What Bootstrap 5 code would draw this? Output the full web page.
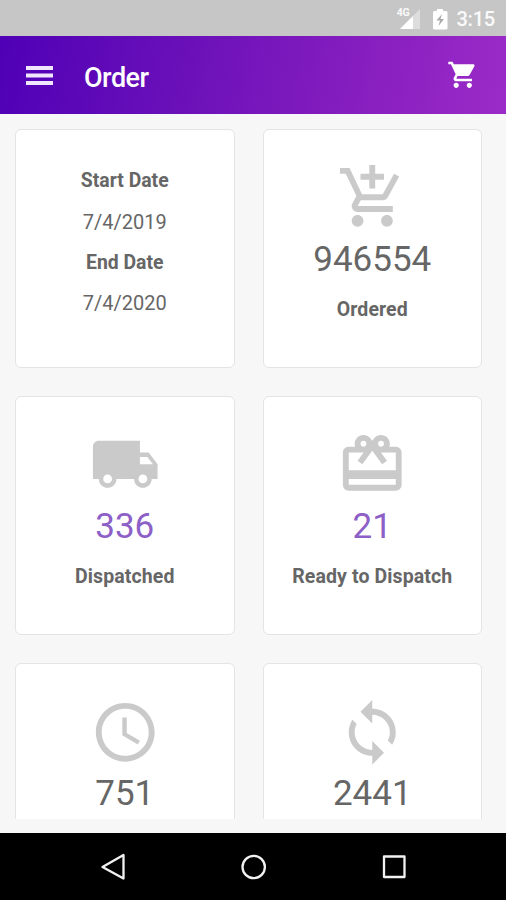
<!DOCTYPE html>
<html lang="en">
<head>
<meta charset="utf-8">
<meta name="viewport" content="width=device-width, initial-scale=1">
<title>Order</title>
<link href="https://cdn.jsdelivr.net/npm/bootstrap@5.3.0/dist/css/bootstrap.min.css" rel="stylesheet">
<style>
body{height:900px;background:#f7f7f7;font-family:Roboto,"Liberation Sans",sans-serif;color:#666}
svg{display:block;flex:none}
.status-strip{height:36px;background:#c6c6c6;color:#fafafa;padding:1px 11px 0 0;font-size:20px;font-weight:500;line-height:36px}
.net-label{font-size:10.5px;font-weight:700;line-height:10px;margin:-11px -9px 0 0;letter-spacing:-.3px}
.clock-text{margin-left:6px;letter-spacing:-.2px}
.app-bar{height:78px;background:linear-gradient(100deg,#4f00b6 0%,#6a10b9 36%,#8a20c0 75%,#9b2bc8 100%);padding:0 28px 0 26px}
.app-title{font-size:27px;font-weight:500;line-height:40px;letter-spacing:-.5px;margin:5px 0 0 31px}
.tiles{height:705px;padding:14.5px 24px 0 15px}
.tile-grid{display:grid;grid-template-columns:219.5px 219.5px;column-gap:28px;row-gap:28px}
.tile{height:239.4px;border:1.5px solid #e4e4e4;border-radius:6px;padding-top:32.5px;background:#fff}
.date-tile{padding-top:31.8px}
.tile svg{width:70.5px;height:70.5px;fill:#cacaca}
.figure-num{font-size:35px;line-height:54px}
.accent{color:#8d60c8}
.caption-text{font-size:19.5px;font-weight:700;line-height:45.6px;letter-spacing:.1px}
.date-line{font-size:20px;line-height:40.7px;letter-spacing:0}
.date-head{font-size:19.4px;font-weight:700}
.sys-bar{height:67px;background:#000}
</style>
</head>
<body class="d-flex flex-column overflow-hidden">
<div class="status-strip d-flex align-items-center justify-content-end">
  <span class="net-label">4G</span>
  <svg width="20" height="20" viewBox="0 0 20 20"><path d="M20 0V20H0Z" fill="#fff" opacity=".4"/><path d="M13 7V20H0Z" fill="#fff"/></svg>
  <svg class="ms-2" width="22" height="22" viewBox="0 0 22 22"><path fill="#fff" d="M9 1h6v2h3q1.500 0 1.500 1.500V20q0 1.500-1.500 1.500H6.500Q5 21.500 5 20V4.500Q5 3 6.500 3H9Z"/><path fill="#aaa" d="M14 6 8.500 12.500H12L10.500 18 16 11h-3.500Z"/></svg>
  <span class="clock-text">3:15</span>
</div>
<nav class="app-bar d-flex align-items-center text-white">
  <svg width="27" height="19" viewBox="0 0 27 19" fill="#f1e6ff"><path d="M0 0h27v4H0zM0 7.500h27v4H0zM0 15h27v4H0z"/></svg>
  <span class="app-title">Order</span>
  <svg class="ms-auto" width="31.500" height="31.500" viewBox="0 0 24 24" fill="#fff"><path d="M7 18c-1.100 0-1.990.9-1.990 2S5.900 22 7 22s2-.9 2-2-.9-2-2-2zM1 2v2h2l3.600 7.590-1.350 2.450c-.16.28-.25.61-.25.96 0 1.100.9 2 2 2h12v-2H7.420c-.14 0-.25-.11-.25-.25l.03-.12.9-1.630h7.450c.75 0 1.410-.41 1.750-1.030l3.580-6.490c.08-.14.12-.31.12-.48 0-.55-.45-1-1-1H5.210l-.94-2H1zm16 16c-1.100 0-1.990.9-1.990 2s.89 2 1.990 2 2-.9 2-2-.9-2-2-2z"/></svg>
</nav>
<main class="tiles overflow-hidden">
  <div class="tile-grid text-center">
    <div class="card tile date-tile">
      <div class="date-line date-head">Start Date</div>
      <div class="date-line">7/4/2019</div>
      <div class="date-line date-head">End Date</div>
      <div class="date-line">7/4/2020</div>
    </div>
    <div class="card tile align-items-center">
      <svg viewBox="0 0 24 24"><path d="M11 9h2V6h3V4h-3V1h-2v3H8v2h3v3zm-4 9c-1.100 0-1.990.9-1.990 2S5.900 22 7 22s2-.9 2-2-.9-2-2-2zm10 0c-1.100 0-1.990.9-1.990 2s.89 2 1.990 2 2-.9 2-2-.9-2-2-2zm-9.830-3.250.03-.12.9-1.630h7.450c.75 0 1.410-.41 1.750-1.030l3.860-7.010L19.420 4h-.01l-1.100 2-2.760 5H8.530l-.13-.27L6.160 6l-.95-2-.94-2H1v2h2l3.600 7.590-1.350 2.450c-.16.28-.25.61-.25.96 0 1.100.9 2 2 2h12v-2H7.420c-.13 0-.25-.11-.25-.25z"/></svg>
      <div class="figure-num">946554</div><div class="caption-text">Ordered</div>
    </div>
    <div class="card tile align-items-center">
      <svg viewBox="0 0 24 24"><path d="M20 8h-3V4H3c-1.100 0-2 .9-2 2v11h2c0 1.660 1.340 3 3 3s3-1.340 3-3h6c0 1.660 1.340 3 3 3s3-1.340 3-3h2v-5l-3-4zM6 18.500c-.83 0-1.500-.67-1.500-1.500s.67-1.500 1.500-1.500 1.500.67 1.500 1.500-.67 1.500-1.500 1.500zm13.500-9 1.960 2.500H17V9.500h2.500zm-1.500 9c-.83 0-1.500-.67-1.500-1.500s.67-1.500 1.500-1.500 1.500.67 1.500 1.500-.67 1.500-1.500 1.500z"/></svg>
      <div class="figure-num accent">336</div><div class="caption-text">Dispatched</div>
    </div>
    <div class="card tile align-items-center">
      <svg viewBox="0 0 24 24"><path d="M20 6h-2.180c.11-.31.18-.65.18-1 0-1.660-1.340-3-3-3-1.050 0-1.960.54-2.500 1.350l-.5.67-.5-.68C10.960 2.540 10.050 2 9 2 7.340 2 6 3.340 6 5c0 .35.07.69.18 1H4c-1.110 0-1.990.89-1.990 2L2 19c0 1.110.89 2 2 2h16c1.110 0 2-.89 2-2V8c0-1.110-.89-2-2-2zm-5-2c.55 0 1 .45 1 1s-.45 1-1 1-1-.45-1-1 .45-1 1-1zM9 4c.55 0 1 .45 1 1s-.45 1-1 1-1-.45-1-1 .45-1 1-1zm11 15H4v-2h16v2zm0-5H4V8h5.080L7 10.830 8.620 12 11 8.760l1-1.360 1 1.360L15.380 12 17 10.830 14.920 8H20v6z"/></svg>
      <div class="figure-num accent">21</div><div class="caption-text">Ready to Dispatch</div>
    </div>
    <div class="card tile align-items-center">
      <svg viewBox="0 0 24 24"><path d="M11.990 2C6.470 2 2 6.480 2 12s4.470 10 9.990 10C17.520 22 22 17.520 22 12S17.520 2 11.990 2zM12 20c-4.420 0-8-3.580-8-8s3.580-8 8-8 8 3.580 8 8-3.580 8-8 8zm.5-13H11v6l5.250 3.150.75-1.230-4.500-2.670z"/></svg>
      <div class="figure-num">751</div>
    </div>
    <div class="card tile align-items-center">
      <svg viewBox="0 0 24 24"><path d="M12 4V1L8 5l4 4V6c3.310 0 6 2.690 6 6 0 1.010-.25 1.970-.7 2.800l1.460 1.460C19.540 15.030 20 13.570 20 12c0-4.420-3.580-8-8-8zm0 14c-3.310 0-6-2.690-6-6 0-1.010.25-1.970.7-2.800L5.240 7.740C4.460 8.970 4 10.430 4 12c0 4.420 3.580 8 8 8v3l4-4-4-4v3z"/></svg>
      <div class="figure-num">2441</div>
    </div>
  </div>
</main>
<footer class="sys-bar mt-auto">
  <svg width="506" height="67" viewBox="0 0 506 67" fill="none" stroke="#f2f2f2" stroke-width="2.300" stroke-linejoin="round"><path d="M102.500 34 123.500 22V45.500Z"/><circle cx="253.700" cy="34" r="11.200"/><rect x="384" y="23.500" width="20.500" height="20.500"/></svg>
</footer>
<script src="https://cdn.jsdelivr.net/npm/bootstrap@5.3.0/dist/js/bootstrap.bundle.min.js"></script>
</body>
</html>
